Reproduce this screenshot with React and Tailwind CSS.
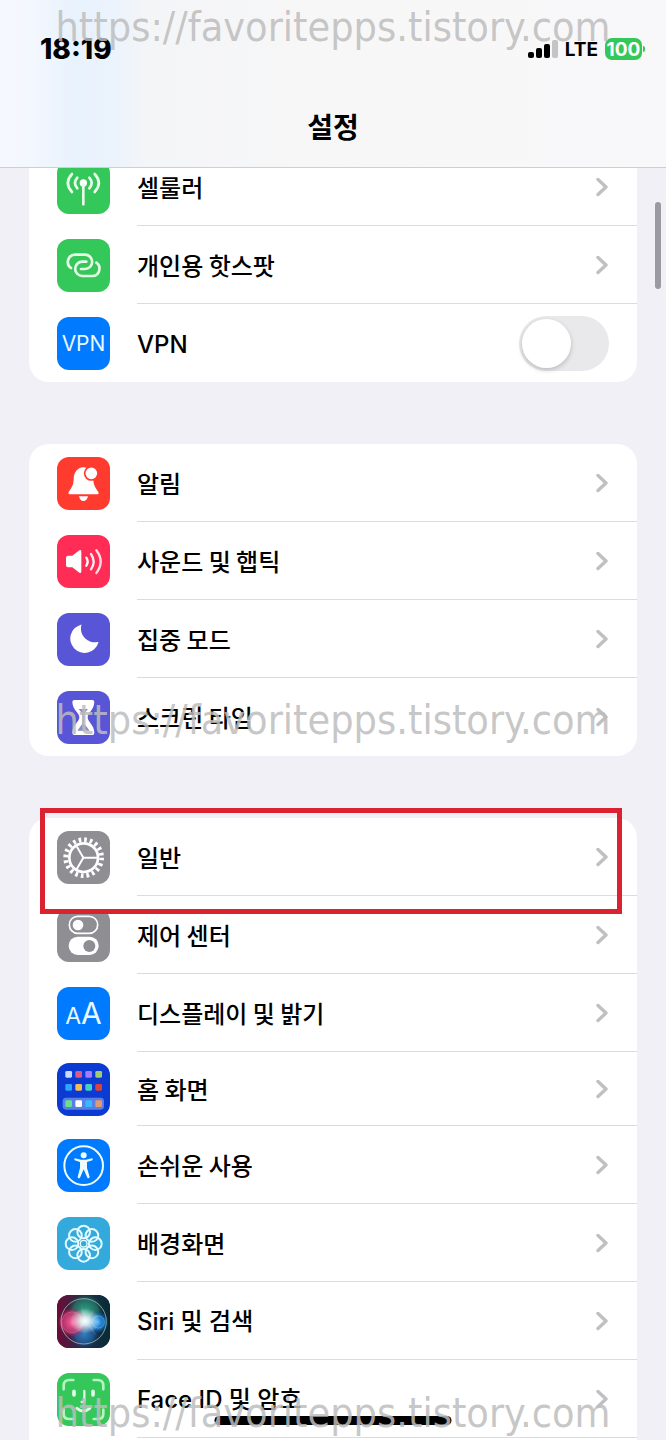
import React from "react";

const FONT = "font-[Inter,'Noto_Sans_CJK_KR',sans-serif]";

function Glyph({ children }) {
  return (
    <svg viewBox="0 0 159 159" className="size-full" fill="none" aria-hidden="true">
      {children}
    </svg>
  );
}

function CellularIcon() {
  return (
    <Glyph>
      <circle cx="79" cy="66" r="11" fill="#fff" />
      <g stroke="#e9fbe9" strokeWidth="8" strokeLinecap="round">
        <path d="M79 70V130" />
        <path d="M61 50Q47 66 61 82M97 50Q111 66 97 82" />
        <path d="M45 39Q20 66 45 93M113 39Q138 66 113 93" />
      </g>
    </Glyph>
  );
}

function HotspotIcon() {
  const link = "M42 87A22 22 0 0 1 54 47H84A21 21 0 0 1 84 90H72";
  return (
    <Glyph>
      <g stroke="#e6fae6" strokeWidth="8" strokeLinecap="round">
        <path d={link} />
        <path d={link} transform="rotate(180 80 79)" />
      </g>
    </Glyph>
  );
}

function BellIcon() {
  return (
    <Glyph>
      <path
        d="M79 31C61 32 50 47 50 66C50 88 40 96 35 105Q32 112 40 112H119Q127 112 124 105C119 96 109 88 109 66C109 47 97 32 79 31Z"
        fill="#fff"
      />
      <path d="M66 118H93Q90 132 79 132Q69 132 66 118Z" fill="#fff" />
      <circle cx="103" cy="49" r="20" fill="#fff" stroke="#ff3b30" strokeWidth="5" />
    </Glyph>
  );
}

function SoundIcon() {
  return (
    <Glyph>
      <path d="M33 62H46L67 46Q73 43 73 50V109Q73 116 67 113L46 97H33Q27 97 27 91V68Q27 62 33 62Z" fill="#fff" />
      <g stroke="#fff" strokeWidth="7" strokeLinecap="round">
        <path d="M88 68Q96 80 88 92" />
        <path d="M102 57Q118 80 102 103" strokeOpacity=".9" />
        <path d="M118 46Q144 80 118 114" strokeOpacity=".85" />
      </g>
    </Glyph>
  );
}

function MoonIcon() {
  return (
    <Glyph>
      <path d="M72 35A43 43 0 1 0 124 89Q125 86 121 87A41 41 0 0 1 73 37Q75 34 72 35Z" fill="#fff" />
    </Glyph>
  );
}

function HourglassIcon() {
  return (
    <Glyph>
      <path
        d="M52 27H106Q112 27 112 33C111 58 92 64 92 79C92 94 111 100 112 125Q112 132 106 132H52Q46 132 46 125C47 100 67 94 67 79C67 64 47 58 46 33Q46 27 52 27Z"
        fill="#fff"
      />
      <path d="M65 54H93Q84 62 82 72V98L98 119H61L76 98V72Q73 62 65 54Z" fill="#8d8bc8" />
    </Glyph>
  );
}

function GearIcon() {
  return (
    <Glyph>
      <circle cx="80" cy="80" r="54" stroke="#fff" strokeWidth="14" strokeDasharray="8 8.96" />
      <circle cx="80" cy="80" r="43" stroke="#fff" strokeWidth="8" />
      <path d="M79 80H121M79 80L58 44M79 80L58 116" stroke="#fff" strokeWidth="6" />
    </Glyph>
  );
}

function ControlIcon() {
  return (
    <Glyph>
      <rect x="37" y="22" width="85" height="51" rx="25" stroke="#fff" strokeWidth="5" />
      <circle cx="63" cy="48" r="16" fill="#fff" />
      <rect x="35" y="83" width="90" height="55" rx="27" fill="#fff" />
      <circle cx="97" cy="111" r="18" fill="#8e8e93" />
    </Glyph>
  );
}

function HomeIcon() {
  const rows = [
    [24, ["#c9d8ff", "#d95b86", "#a47bff", "#a3cc6b"]],
    [63, ["#2ba7ff", "#f2bd57", "#45cfc3", "#d9433f"]],
    [112, ["#68e08b", "#fff", "#38b9ff", "#e59a6e"]],
  ];
  return (
    <Glyph>
      <rect x="17" y="104" width="124" height="36" rx="10" fill="#5a7fe4" />
      {rows.map(([y, colors]) =>
        colors.map((c, i) => <rect key={`${y}-${i}`} x={25 + i * 30} y={y} width="20" height="20" rx="4" fill={c} />)
      )}
    </Glyph>
  );
}

function AccessibilityIcon() {
  return (
    <Glyph>
      <circle cx="80" cy="80" r="58" stroke="#eefcff" strokeWidth="6" />
      <circle cx="80" cy="49" r="9" fill="#eefcff" />
      <path
        d="M54 58L72 62H87L105 58Q110 60 106 64L90 69V87L98 114Q96 121 91 116L80 91L69 116Q63 121 62 114L69 87V69L53 64Q49 60 54 58Z"
        fill="#eefcff"
      />
    </Glyph>
  );
}

function WallpaperIcon() {
  return (
    <Glyph>
      <g stroke="#e4fbff" strokeWidth="6">
        {[0, 45, 90, 135, 180, 225, 270, 315].map((a) => (
          <circle key={a} cx="80" cy="45" r="19" transform={`rotate(${a} 80 80)`} />
        ))}
        <circle cx="80" cy="80" r="10" strokeWidth="4" />
      </g>
    </Glyph>
  );
}

function SiriIcon() {
  return (
    <Glyph>
      <defs>
        <linearGradient id="siri-back" x1="0" y1="0" x2="1" y2="0">
          <stop offset="0" stopColor="#6d0b37" />
          <stop offset=".5" stopColor="#24304a" />
          <stop offset="1" stopColor="#052b36" />
        </linearGradient>
        <radialGradient id="siri-red">
          <stop offset="0" stopColor="#ff5f9c" />
          <stop offset=".7" stopColor="#d83c78" stopOpacity=".7" />
          <stop offset="1" stopColor="#b01a57" stopOpacity="0" />
        </radialGradient>
        <radialGradient id="siri-blue">
          <stop offset="0" stopColor="#3facff" />
          <stop offset=".6" stopColor="#2186e0" stopOpacity=".7" />
          <stop offset="1" stopColor="#0a41a8" stopOpacity="0" />
        </radialGradient>
        <radialGradient id="siri-green">
          <stop offset="0" stopColor="#31a98a" />
          <stop offset=".7" stopColor="#23806c" stopOpacity=".7" />
          <stop offset="1" stopColor="#11483d" stopOpacity="0" />
        </radialGradient>
        <radialGradient id="siri-white">
          <stop offset="0" stopColor="#fff" />
          <stop offset=".3" stopColor="#eaffff" stopOpacity=".85" />
          <stop offset="1" stopColor="#fff" stopOpacity="0" />
        </radialGradient>
      </defs>
      <rect width="159" height="159" fill="url(#siri-back)" />
      <circle cx="85" cy="50" r="54" fill="url(#siri-green)" />
      <circle cx="82" cy="116" r="46" fill="url(#siri-blue)" opacity=".65" />
      <circle cx="46" cy="82" r="44" fill="url(#siri-red)" />
      <circle cx="122" cy="82" r="34" fill="url(#siri-blue)" />
      <circle cx="45" cy="82" r="31" stroke="#f07fae" strokeWidth="2" opacity=".5" />
      <circle cx="124" cy="81" r="18" stroke="#65cfff" strokeWidth="2" opacity=".7" />
      <ellipse cx="84" cy="78" rx="46" ry="38" fill="url(#siri-white)" />
      <path d="M84 78L51 48L78 70L72 27L88 68L112 44L96 76L119 122L86 90L56 101Z" fill="#fff" opacity=".12" />
      <circle cx="80" cy="79" r="68" stroke="#a5c5b8" strokeWidth="3" opacity=".75" />
    </Glyph>
  );
}

function FaceIcon() {
  return (
    <Glyph>
      <g stroke="#b5f3c0" strokeWidth="8" strokeLinecap="round">
        <path d="M20 49V38Q20 21 37 21H49M110 21H122Q139 21 139 38V49M20 110V122Q20 138 37 138H49M110 138H122Q139 138 139 122V110" />
      </g>
      <g stroke="#e4fbe8" strokeWidth="9" strokeLinecap="round">
        <path d="M51 55V66M108 55V66" strokeWidth="11" />
        <path d="M82 54V82Q82 87 74 87" strokeWidth="7" />
        <path d="M60 106Q79 122 98 106" />
      </g>
    </Glyph>
  );
}

const groups = [
  [
    { label: "셀룰러", tile: "bg-[#34c759]", icon: <CellularIcon /> },
    { label: "개인용 핫스팟", tile: "bg-[#34c759]", icon: <HotspotIcon /> },
    {
      label: "VPN",
      latin: true,
      tile: "bg-[#007aff]",
      icon: <span className="text-[21px] leading-none text-[#e8f8ff]">VPN</span>,
      toggle: true,
    },
  ],
  [
    { label: "알림", tile: "bg-[#ff3b30]", icon: <BellIcon /> },
    { label: "사운드 및 햅틱", tile: "bg-[#ff2d55]", icon: <SoundIcon /> },
    { label: "집중 모드", tile: "bg-[#5856d6]", icon: <MoonIcon /> },
    { label: "스크린 타임", tile: "bg-[#5856d6]", icon: <HourglassIcon /> },
  ],
  [
    { label: "일반", tile: "bg-[#8e8e93]", icon: <GearIcon />, marked: true },
    { label: "제어 센터", tile: "bg-[#8e8e93]", icon: <ControlIcon /> },
    {
      label: "디스플레이 및 밝기",
      tile: "bg-[#007aff]",
      icon: (
        <span className="flex items-baseline leading-none text-[#e8f8ff]">
          <span className="text-[23px]">A</span>
          <span className="text-[30px]">A</span>
        </span>
      ),
    },
    { label: "홈 화면", tile: "bg-[#0b3bd2]", icon: <HomeIcon />, compact: true },
    { label: "손쉬운 사용", tile: "bg-[#007aff]", icon: <AccessibilityIcon /> },
    { label: "배경화면", tile: "bg-[#34aadc]", icon: <WallpaperIcon /> },
    { label: "Siri 및 검색", latin: true, tile: "bg-[#24243b]", icon: <SiriIcon /> },
    { label: "Face ID 및 암호", latin: true, tile: "bg-[#34c759]", icon: <FaceIcon />, more: true },
  ],
];

function Chevron() {
  return (
    <svg viewBox="0 0 12 20" className="mr-[29px] h-5 w-3" fill="none" aria-hidden="true">
      <path d="M2 2.5L10 10L2 17.5" stroke="#c0c0c3" strokeWidth="3.4" strokeLinecap="round" strokeLinejoin="round" />
    </svg>
  );
}

function Row({ item, last }) {
  const Tag = item.toggle ? "label" : "a";
  return (
    <li className="relative">
      <Tag
        {...(item.toggle ? { htmlFor: "vpn-switch" } : { href: "#" })}
        className={`flex items-center pl-7 ${item.compact ? "h-[74px]" : "h-[78px]"}`}
      >
        <span className={`flex size-[53px] shrink-0 items-center justify-center overflow-hidden rounded-xl ${item.tile}`}>
          {item.icon}
        </span>
        <span
          className={`ml-[27px] flex h-full grow items-center justify-between ${last && !item.more ? "" : "border-b border-[#dcdcdf]"}`}
        >
          <span
            className={`text-2xl font-medium text-black ${item.latin ? "pt-[3px]" : "font-['Noto_Sans_CJK_KR',sans-serif]"}`}
          >
            {item.label}
          </span>
          {item.toggle ? (
            <input
              id="vpn-switch"
              type="checkbox"
              role="switch"
              className="mr-7 flex h-[55px] w-[90px] appearance-none items-center rounded-full bg-[#e9e9eb] px-[3px] before:size-[49px] before:rounded-full before:bg-white before:shadow-[0_2px_5px_rgba(0,0,0,0.2)] checked:justify-end checked:bg-[#34c759]"
            />
          ) : (
            <Chevron />
          )}
        </span>
      </Tag>
      {item.marked && (
        <div className="pointer-events-none absolute -top-[10px] right-[15px] -bottom-[18px] left-[11px] z-10 border-[5px] border-[#da2231]" />
      )}
    </li>
  );
}

function StatusBar() {
  return (
    <div className="flex h-[98px] items-center justify-between pr-[21px] pl-10">
      <time className="text-[28px] font-extrabold text-black">18:19</time>
      <div className="flex items-center gap-[7px]">
        <div className="flex items-end gap-[2px]">
          <span className="h-[6px] w-[6px] rounded-xs bg-black" />
          <span className="h-[10px] w-[6px] rounded-xs bg-black" />
          <span className="h-[14px] w-[6px] rounded-xs bg-black" />
          <span className="h-[18px] w-[6px] rounded-xs bg-[#c4c4c4]" />
        </div>
        <span className="text-[19px] leading-none font-bold text-black">LTE</span>
        <div className="flex items-center gap-px">
          <span className="flex h-[22px] w-[37px] items-center justify-center rounded-[7px] bg-[#34c759] text-[19px] leading-none font-bold text-white">
            100
          </span>
          <span className="h-[6px] w-[2px] rounded-r-full bg-[#34c759]" />
        </div>
      </div>
    </div>
  );
}

function Watermark() {
  return (
    <p className="text-[41px] leading-12 whitespace-nowrap">https://favoritepps.tistory.com</p>
  );
}

export default function App() {
  return (
    <div className={`relative flex h-screen flex-col overflow-hidden bg-[#f1f0f6] ${FONT}`}>
      <header className="shrink-0 border-b border-[#cfcfd2] bg-[linear-gradient(90deg,#f6f8fe_0%,#f3f7fe_5%,#e8f2fd_11%,#ebf3fc_17%,#f4f5f7_22%,#f7f7f7_50%,#f8f8fa_100%)]">
        <StatusBar />
        <h1 className="h-[69px] pt-2 text-center text-[28px] leading-11 font-bold text-black">설정</h1>
      </header>

      <main className="relative min-h-0 grow overflow-hidden">
        <div className="-mt-5 flex flex-col gap-[62px] px-[29px]">
          {groups.map((items, g) => (
            <ul key={g} className={`rounded-[20px] bg-white ${g === groups.length - 1 ? "pb-5" : ""}`}>
              {items.map((item, i) => (
                <Row key={item.label} item={item} last={i === items.length - 1} />
              ))}
            </ul>
          ))}
        </div>
        <div className="absolute top-[34px] right-[5px] h-[87px] w-[6px] rounded-full bg-[#9b9aa0]" />
      </main>

      <div className="absolute bottom-[15px] left-1/2 h-[9px] w-[237px] -translate-x-1/2 rounded-full bg-black" />

      <div className="pointer-events-none absolute inset-0 z-20 flex flex-col items-center justify-between py-[3px] font-['DejaVu_Sans_Condensed','DejaVu_Sans',sans-serif] text-[#bdbdbd]/85">
        <Watermark />
        <Watermark />
        <Watermark />
      </div>
    </div>
  );
}
